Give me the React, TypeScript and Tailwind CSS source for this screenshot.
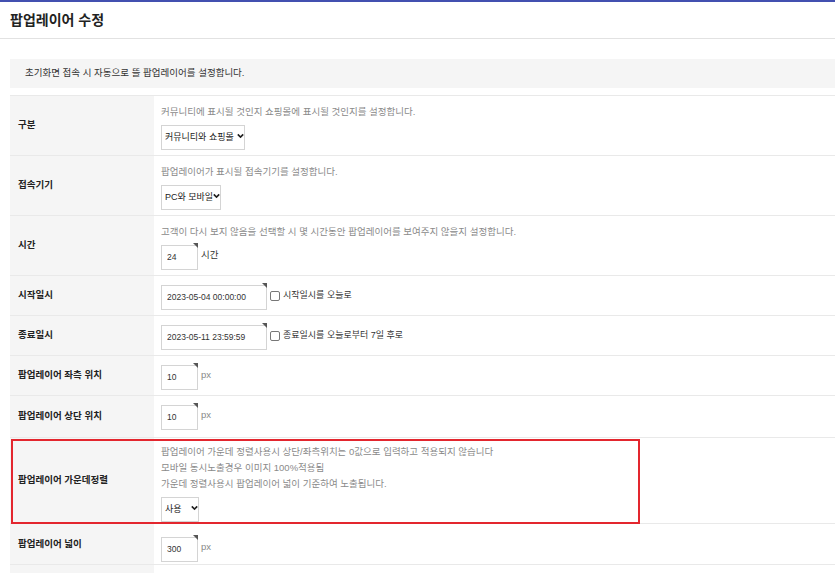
import React from 'react';

const font = "font-['Liberation_Sans','Noto_Sans_CJK_KR',sans-serif]";

const Chevron = () => (
  <svg width="7" height="5" viewBox="0 0 7 5" className="pointer-events-none absolute right-[1px] top-1/2 -translate-y-1/2">
    <path d="M0.8 0.9 L3.5 3.6 L6.2 0.9" fill="none" stroke="#222" strokeWidth="1.6" />
  </svg>
);

const Select: React.FC<{ value: string; width: string }> = ({ value, width }) => (
  <div className={`relative h-[25px] ${width}`}>
    <select
      defaultValue={value}
      className="h-full w-full appearance-none border border-[#d4d4d4] bg-white pl-[3px] pr-0 text-[9px] text-[#222] outline-none"
    >
      <option>{value}</option>
    </select>
    <Chevron />
  </div>
);

const Input: React.FC<{ value: string; width: string }> = ({ value, width }) => (
  <div className={`relative h-[25px] ${width}`}>
    <input
      defaultValue={value}
      className="h-full w-full border border-[#d4d4d4] bg-white pl-[5px] text-[8.5px] text-[#333] outline-none"
    />
    <span className="absolute right-0 top-0 h-0 w-0 border-l-[5px] border-t-[5px] border-l-transparent border-t-[#555]" />
  </div>
);

const Check: React.FC<{ label: string }> = ({ label }) => (
  <label className="ml-[3px] flex items-center gap-[3px] text-[9px] text-[#333]">
    <span className="h-[10px] w-[10px] rounded-[2px] border border-[#777] bg-white" />
    {label}
  </label>
);

const Desc: React.FC<{ children: React.ReactNode }> = ({ children }) => (
  <p className="h-[16px] text-[9.5px] leading-[16px] text-[#8a8a8a]">{children}</p>
);

const Unit: React.FC<{ children: React.ReactNode }> = ({ children }) => (
  <span className="text-[9.5px] text-[#888]">{children}</span>
);

const Row: React.FC<{ label: string; children?: React.ReactNode; className?: string; highlight?: boolean }> = ({
  label,
  children,
  className = 'py-[7px]',
  highlight,
}) => (
  <div className="relative flex border-b border-[#e9e9e9]">
    <div className="flex w-[144px] shrink-0 items-center bg-[#f5f5f5] pl-[8px] text-[9.5px] font-bold text-[#222]">
      {label}
    </div>
    <div className={`flex-1 pl-[7px] ${className}`}>{children}</div>
    {highlight && (
      <div className="pointer-events-none absolute left-[1px] top-[1px] bottom-[-1px] w-[629px] border-2 border-[#e3262e]" />
    )}
  </div>
);

export default function App() {
  return (
    <div className={`h-[573px] overflow-hidden bg-white ${font}`}>
      <div className="h-[2px] bg-[#4350b0]" />
      <div className="flex h-[37px] items-center border-b border-[#e2e2e2] pl-[10px]">
        <h1 className="text-[14px] font-bold text-[#222]">팝업레이어 수정</h1>
      </div>

      <div className="ml-[10px] mt-[20px] w-[900px]">
        <div className="flex h-[29px] items-center bg-[#f5f5f5] pl-[15px] text-[9.5px] text-[#333]">
          초기화면 접속 시 자동으로 뜰 팝업레이어를 설정합니다.
        </div>

        <div className="mt-[7px] border-t border-[#e9e9e9]">
          <Row label="구분" className="pt-[8px] pb-[7px]">
            <Desc>커뮤니티에 표시될 것인지 쇼핑몰에 표시될 것인지를 설정합니다.</Desc>
            <div className="mt-[3px]">
              <Select value="커뮤니티와 쇼핑몰" width="w-[84px]" />
            </div>
          </Row>
          <Row label="접속기기" className="pt-[8px] pb-[7px]">
            <Desc>팝업레이어가 표시될 접속기기를 설정합니다.</Desc>
            <div className="mt-[3px]">
              <Select value="PC와 모바일" width="w-[60px]" />
            </div>
          </Row>
          <Row label="시간" className="pt-[8px] pb-[7px]">
            <Desc>고객이 다시 보지 않음을 선택할 시 몇 시간동안 팝업레이어를 보여주지 않을지 설정합니다.</Desc>
            <div className="mt-[3px] flex items-center gap-[3px]">
              <Input value="24" width="w-[37px]" />
              <span className="text-[9.5px] text-[#333]">시간</span>
            </div>
          </Row>
          <Row label="시작일시">
            <div className="flex items-center">
              <Input value="2023-05-04 00:00:00" width="w-[106px]" />
              <Check label="시작일시를 오늘로" />
            </div>
          </Row>
          <Row label="종료일시">
            <div className="flex items-center">
              <Input value="2023-05-11 23:59:59" width="w-[106px]" />
              <Check label="종료일시를 오늘로부터 7일 후로" />
            </div>
          </Row>
          <Row label="팝업레이어 좌측 위치">
            <div className="flex items-center gap-[3px]">
              <Input value="10" width="w-[37px]" />
              <Unit>px</Unit>
            </div>
          </Row>
          <Row label="팝업레이어 상단 위치" className="pt-[7px] pb-[9px]">
            <div className="flex items-center gap-[3px]">
              <Input value="10" width="w-[37px]" />
              <Unit>px</Unit>
            </div>
          </Row>
          <Row label="팝업레이어 가운데정렬" className="pt-[6px] pb-[3px]" highlight>
            <Desc>팝업레이어 가운데 정렬사용시 상단/좌측위치는 0값으로 입력하고 적용되지 않습니다</Desc>
            <Desc>모바일 동시노출경우 이미지 100%적용됨</Desc>
            <Desc>가운데 정렬사용시 팝업레이어 넓이 기준하여 노출됩니다.</Desc>
            <div className="mt-[3px]">
              <Select value="사용" width="w-[38px]" />
            </div>
          </Row>
          <Row label="팝업레이어 넓이" className="pt-[11px] pb-[4px]">
            <div className="flex items-center gap-[3px]">
              <Input value="300" width="w-[37px]" />
              <Unit>px</Unit>
            </div>
          </Row>
          <Row label="" className="h-[40px]" />
        </div>
      </div>
    </div>
  );
}
